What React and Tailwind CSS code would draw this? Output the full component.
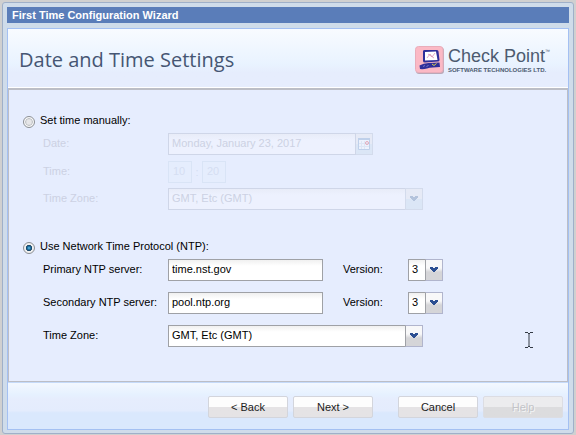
import React from "react";

function Chevron({ className }) {
  return (
    <svg viewBox="0 0 8 6" className={`h-[6px] w-2 ${className}`} aria-hidden="true">
      <path d="M0 0h3v1h2V0h3v2H7v1H6v1H5v1H3V4H2V3H1V2H0z" fill="currentColor" />
    </svg>
  );
}

function Combo({ id, label, value, disabled, className }) {
  return (
    <div
      className={`relative h-[22px] shrink-0 border ${className} ${
        disabled ? "border-[#cfd6e8] bg-[#edf1fe]" : "border-[#9fa1a6] bg-white"
      }`}
    >
      <select
        id={id}
        aria-label={label}
        disabled={disabled}
        defaultValue={value}
        className={`block h-full w-full appearance-none bg-linear-to-b to-transparent to-30% pb-[2px] pl-[3px] opacity-100 outline-none ${
          disabled ? "from-[#e8ecf8] text-[#ccd1e3]" : "from-[#f0f0f0] text-black"
        }`}
      >
        <option>{value}</option>
      </select>
      <span
        className={`pointer-events-none absolute -top-px -right-px -bottom-px flex w-[18px] items-center justify-center border ${
          disabled
            ? "border-[#d3dbec] bg-linear-to-b from-[#e6eaf6] from-50% to-[#dbe6f6] to-50%"
            : "border-[#b1b5cd] border-l-[#9fa1a6] bg-linear-to-b from-[#f8f8f9] from-40% to-[#d5d5d8] to-60%"
        }`}
      >
        <Chevron className={disabled ? "text-[#b4c3dc]" : "text-[#2c4f92]"} />
      </span>
    </div>
  );
}

function Choice({ id, children, ...rest }) {
  return (
    <div className="flex h-4 items-center gap-[5px]">
      <input
        id={id}
        type="radio"
        name="time-source"
        className="mt-[2px] size-3 appearance-none rounded-full border border-[#8b8f94] bg-[radial-gradient(circle,#e6e6e8_30%,#c4c7ca_50%,#f8f8f8_58%)] checked:bg-[radial-gradient(circle_at_50%_50%,#6cc4ea_0%,#1f74a6_22%,#173f60_40%,#f0f0f0_48%)]"
        {...rest}
      />
      <label htmlFor={id} className="pb-[2px]">{children}</label>
    </div>
  );
}

function FieldLabel({ htmlFor, muted, children }) {
  return (
    <label htmlFor={htmlFor} className={`w-[125px] shrink-0 pb-[2px] ${muted ? "text-[#ccd1e3]" : ""}`}>
      {children}
    </label>
  );
}

const inputBase =
  "h-[22px] border border-[#9fa1a6] bg-white bg-linear-to-b from-[#f0f0f0] to-white to-30% px-[3px] pb-[2px] outline-none";
const mutedInput =
  "h-[22px] border border-[#cfd6e8] bg-linear-to-b from-[#e8ecf8] to-[#edf1fe] to-30% px-[3px] pb-[2px] text-[#ccd1e3] outline-none";
const tinyInput =
  "h-[22px] w-6 border border-[#d9e4f6] bg-[#e5edfd] px-1 pb-[2px] text-[#d5def2] outline-none";

function ServerRow({ id, label, server }) {
  return (
    <div className="flex items-center pl-5">
      <FieldLabel htmlFor={id}>{label}</FieldLabel>
      <input id={id} defaultValue={server} className={`w-[155px] ${inputBase}`} />
      <label htmlFor={`${id}-version`} className="ml-5 w-[65px] shrink-0 pb-[2px]">
        Version:
      </label>
      <Combo id={`${id}-version`} value="3" className="w-[35px]" />
    </div>
  );
}

function WizardButton({ children, disabled }) {
  return (
    <button
      disabled={disabled}
      className={`h-[22px] w-20 rounded-[2px] border bg-linear-to-b pt-px ${
        disabled
          ? "border-[#dcdde3] from-[#ececee] from-50% to-[#dcdcde] to-50% text-[#c3c4c8] [text-shadow:1px_1px_0_#f6f6f6]"
          : "border-[#d3d5dc] from-[#fdfdfd] from-50% to-[#e5e3e5] to-50% text-[#1c1c1c]"
      }`}
    >
      {children}
    </button>
  );
}

function BrandMark() {
  return (
    <svg viewBox="0 0 29 28" className="h-7 w-[29px]" aria-hidden="true">
      <rect x="1" y="1.5" width="28" height="26.5" rx="3" fill="#b9a9b9" />
      <rect x="0.5" y="0.5" width="27.5" height="26" rx="3" fill="#fbb9c5" stroke="#e9adba" />
      <path d="M8 5.500q-.5-1.500 1.500-1.500L22 4q1.500 0 1.500 1.500L24.500 14q0 1.500-1.500 1.500L10 16.500q-2 0-2-1.500z" fill="#2f2f9a" />
      <path d="M10 6l11-.5 1.500 8.500-12.500.5z" fill="#fff" />
      <path d="M12 12l3-4 2 3 3-4M13 8l6 4" fill="none" stroke="#d893b5" strokeWidth="0.8" />
      <path d="M4.500 19.500q4-2.500 9-2.500L24.500 16.500l.5 4.500q-8 0-13 1.500-4 1-7 .5z" fill="#2f2f9a" />
      <path d="M8 20.500l2-1M11.500 20.500l2-1" stroke="#8b8bd0" strokeWidth="0.8" />
      <path d="M17 18l2 1.500 2.500-2" fill="none" stroke="#d8d44a" strokeWidth="1" />
    </svg>
  );
}

function Brand() {
  return (
    <div className="flex items-center gap-1 text-[#4d5b70]">
      <BrandMark />
      <div className="flex flex-col">
        <span className="flex items-start text-[18px] leading-[20px] whitespace-nowrap">
          Check Point<span className="text-[5px] leading-[10px]">™</span>
        </span>
        <span className="text-[6px] leading-[8px] font-bold whitespace-nowrap">
          SOFTWARE TECHNOLOGIES LTD.
        </span>
      </div>
    </div>
  );
}

export default function App() {
  return (
    <div className="flex min-h-screen flex-col bg-[#d0d0d0] px-[2px] pt-[2px] pb-px font-['Liberation_Sans',Arial,sans-serif] text-[11px] leading-[14px] text-black">
      <div className="relative flex flex-1 flex-col rounded-[3px] border border-[#9fb0c9] bg-[#cfdcea] p-1 pb-[3px]">
        <div className="h-4 bg-[#5a7db9] px-[5px] leading-4 font-bold text-white">
          First Time Configuration Wizard
        </div>

        <main className="mt-[5px] flex flex-1 flex-col border border-[#a4c0f2]">
          <header className="flex h-[59px] items-center justify-between border-b border-white bg-linear-to-b from-[#f8fbff] via-[#e9f3ff] via-60% to-[#e6edfd] to-75% pt-[3px] pr-[18px] pl-[11px]">
            <h1 className="font-['Open_Sans','Noto_Sans',sans-serif] text-[20px] leading-[28px] text-[#465673]">
              Date and Time Settings
            </h1>
            <Brand />
          </header>

          <form className="flex flex-1 flex-col border border-t-2 border-[#bcbec6] bg-[#e6edfe] pt-[23px] pr-4 pl-[14px]">
            <Choice id="manual">Set time manually:</Choice>
            <div className="mt-1 flex items-center pl-5">
              <FieldLabel htmlFor="date" muted>Date:</FieldLabel>
              <input id="date" disabled defaultValue="Monday, January 23, 2017" className={`w-[188px] ${mutedInput}`} />
              <button
                type="button"
                disabled
                aria-label="Pick a date"
                className="flex h-[22px] w-[17px] items-center justify-center border border-l-0 border-[#d3dbec] bg-linear-to-b from-[#e6eaf6] from-50% to-[#dbe6f6] to-50%"
              >
                <svg viewBox="0 0 12 12" className="size-3" aria-hidden="true">
                  <path d="M.5 .5h11v11H.5z" fill="#edf2fd" stroke="#bfd0ea" />
                  <path d="M0 0h12v2H0z" fill="#bfd0ea" />
                  <path d="M3.500 3v8M6.500 3v8M1 5.500h10M1 8.500h10" stroke="#dde6f5" />
                  <circle cx="9" cy="5" r="1.500" fill="none" stroke="#e3aabb" />
                </svg>
              </button>
            </div>
            <div className="mt-[6px] flex items-center pl-5">
              <FieldLabel htmlFor="hour" muted>Time:</FieldLabel>
              <input id="hour" disabled defaultValue="10" className={tinyInput} />
              <span className="w-[10px] text-center text-[#d5def2]">:</span>
              <input aria-label="Minutes" disabled defaultValue="20" className={tinyInput} />
            </div>
            <div className="mt-[5px] flex items-center pl-5">
              <FieldLabel htmlFor="zone-manual" muted>Time Zone:</FieldLabel>
              <Combo id="zone-manual" value="GMT, Etc (GMT)" disabled className="w-[255px]" />
            </div>

            <div className="mt-[29px] mb-1">
              <Choice id="ntp" defaultChecked>Use Network Time Protocol (NTP):</Choice>
            </div>
            <div className="flex flex-col gap-[11px]">
              <ServerRow id="primary" label="Primary NTP server:" server="time.nst.gov" />
              <ServerRow id="secondary" label="Secondary NTP server:" server="pool.ntp.org" />
              <div className="flex items-center pl-5">
                <FieldLabel htmlFor="zone-ntp">Time Zone:</FieldLabel>
                <Combo id="zone-ntp" value="GMT, Etc (GMT)" className="w-[255px]" />
              </div>
            </div>
          </form>

          <footer className="flex h-[47px] items-center justify-end gap-[5px] border-t border-[#c5dafa] bg-[linear-gradient(#f3f8ff,#e6f1ff_25%,#e6edfd_35%,#e4ecfd_60%,#dae8fd_65%)] pt-px pr-[5px]">
            <WizardButton>&lt; Back</WizardButton>
            <WizardButton>Next &gt;</WizardButton>
            <span className="w-[15px]" />
            <WizardButton>Cancel</WizardButton>
            <WizardButton disabled>Help</WizardButton>
          </footer>
        </main>

        <svg viewBox="0 0 8 16" className="pointer-events-none absolute right-10 bottom-[85px] h-4 w-2" aria-hidden="true">
          <path d="M0 .5h3M5 .5h3M3 1.500h2M4 1v14M3 14.500h2M0 15.500h3M5 15.500h3" fill="none" stroke="#333a45" />
        </svg>
      </div>
    </div>
  );
}
